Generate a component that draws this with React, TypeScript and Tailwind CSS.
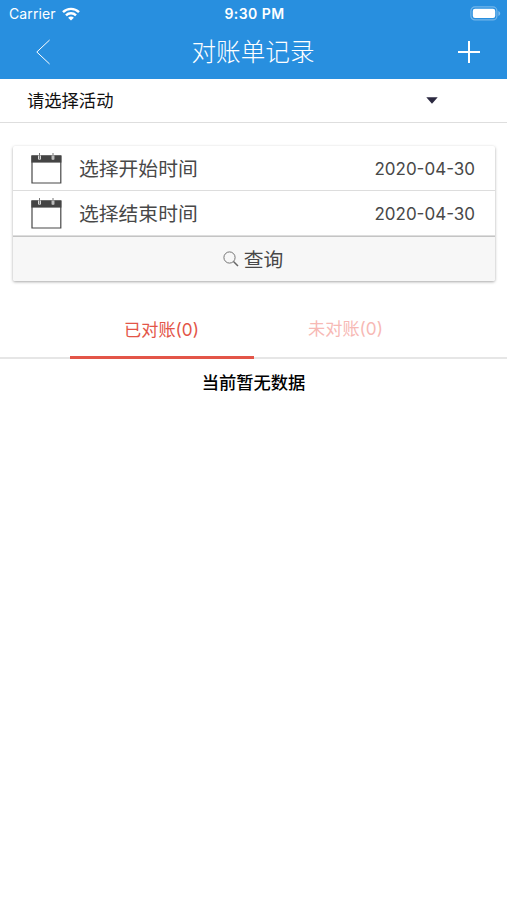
import clsx from "clsx";

const dates = [
  { label: "选择开始时间", value: "2020-04-30" },
  { label: "选择结束时间", value: "2020-04-30" },
];

const WifiIcon = () => (
  <svg width="18" height="14" viewBox="0 0 18 14" fill="none" stroke="white" strokeWidth="2.4">
    <path d="M1 5.2C5.4 0.7 12.6 0.7 17 5.2" />
    <path d="M4 8.4C6.8 5.6 11.2 5.6 14 8.4" />
    <path d="M9 13.6L6.1 10.7C7.7 9.2 10.3 9.2 11.9 10.7Z" fill="white" stroke="none" />
  </svg>
);

const BatteryIcon = () => (
  <svg width="31" height="15" viewBox="0 0 31 15" fill="none">
    <rect x="0.9" y="0.9" width="26" height="13" rx="4" stroke="white" strokeOpacity="0.35" strokeWidth="1.2" />
    <rect x="2.8" y="2.8" width="22.4" height="9.2" rx="2.2" fill="white" />
    <path d="M28.4 5V10C29.5 9.5 30.2 8.6 30.2 7.5C30.2 6.4 29.5 5.5 28.4 5Z" fill="white" fillOpacity="0.4" />
  </svg>
);

const CalendarIcon = () => (
  <svg width="31" height="31" viewBox="0 0 31 31" fill="none">
    <path d="M1 3H29.8V30H1Z" fill="white" stroke="#484848" strokeWidth="1.2" />
    <path d="M0.4 2.4H30.4V9.6H0.4Z" fill="#444" />
    <path d="M8.5 2.4V6.6M22 2.4V6.6" stroke="white" strokeWidth="2.6" />
    <path d="M8.5 0V6M22 0V6" stroke="#777" strokeWidth="1" />
  </svg>
);

const SearchIcon = () => (
  <svg width="16" height="16" viewBox="0 0 16 16" fill="none" stroke="#666">
    <circle cx="6.5" cy="6.5" r="5.6" strokeWidth="0.9" />
    <path d="M10.5 10.5L15 15" strokeWidth="1.5" />
  </svg>
);

const Header = () => (
  <header className="h-[79px] bg-[#288fdf] text-white">
    <div className="grid h-[27px] grid-cols-3 items-center pr-1.5 pl-[9px] text-[14px]">
      <div className="flex items-center gap-[6px]">
        <span className="tracking-[0.1px]">Carrier</span>
        <WifiIcon />
      </div>
      <span className="pr-px text-center font-semibold tracking-[0.45px]">9:30 PM</span>
      <div className="flex justify-end">
        <BatteryIcon />
      </div>
    </div>
    <div className="flex h-[50px] items-center justify-between pr-[26px] pl-[35px]">
      <svg width="16" height="26" viewBox="0 0 16 26" fill="none" stroke="white" strokeWidth="1">
        <path d="M14.6 1L1.8 13L14.6 25" />
      </svg>
      <h1 className="pr-0.5 text-[24.6px] leading-none font-light">对账单记录</h1>
      <svg width="24" height="24" viewBox="0 0 24 24" fill="none" stroke="white" strokeWidth="2">
        <path d="M12 1V23M1 12H23" />
      </svg>
    </div>
  </header>
);

const DateRow = ({ label, value }: { label: string; value: string }) => (
  <div className="flex h-[45px] items-center border-b border-[#ddd] pr-5 pl-[18px]">
    <CalendarIcon />
    <span className="ml-[17px] pt-1 text-[19.8px]">{label}</span>
    <span className="ml-auto pt-[3px] text-[17px]">{value}</span>
  </div>
);

const Tab = ({ label, active }: { label: string; active?: boolean }) => (
  <button
    className={clsx(
      "h-[55px] w-[184px] border-b-[3px] text-[17.2px]",
      active ? "border-[#e35548] text-[#e35548]" : "border-transparent pb-0.5 text-[#f7b9b5]",
    )}
  >
    {label}
  </button>
);

export default function App() {
  return (
    <div className="min-h-[900px] bg-white font-['Inter','Noto_Sans_CJK_SC',sans-serif]">
      <Header />
      <div className="flex h-11 items-center justify-between border-b border-[#dedede] pr-[69px] pl-[27px] text-[17.3px] text-[#111]">
        <span>请选择活动</span>
        <svg width="12" height="7" viewBox="0 0 12 7" fill="#2b2940">
          <path d="M0.3 0.3H11.7L6 6.8Z" />
        </svg>
      </div>
      <div className="mt-[23px] mr-3 ml-[13px] rounded-[2px] bg-white text-[#484848] shadow-[0_1px_3px_rgba(0,0,0,0.35)]">
        {dates.map((d) => (
          <DateRow key={d.label} {...d} />
        ))}
        <button className="flex h-[45px] w-full items-center justify-center gap-[5px] rounded-b-[2px] border-t border-[#c4c4c4] bg-[#f7f7f7] pr-0.5 text-[19.8px]">
          <SearchIcon />
          <span className="pt-[3px]">查询</span>
        </button>
      </div>
      <div className="mt-[23px] flex justify-center border-b border-transparent shadow-[inset_0_-2px_0_#e6e6e6]">
        <Tab label="已对账(0)" active />
        <Tab label="未对账(0)" />
      </div>
      <p className="mt-[11px] text-center text-[17.3px] leading-6 font-medium text-black">当前暂无数据</p>
    </div>
  );
}
